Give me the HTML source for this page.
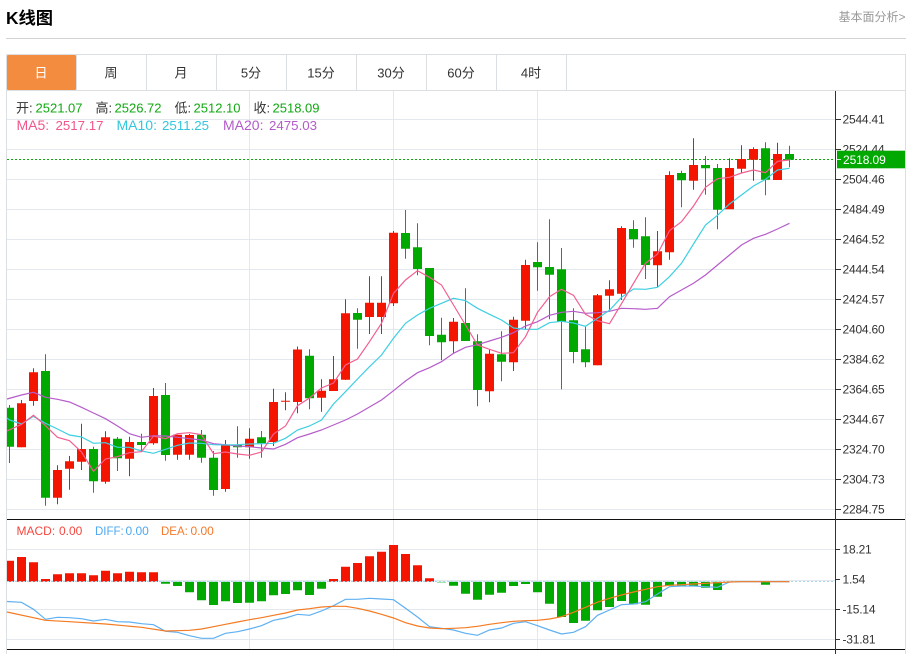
<!DOCTYPE html>
<html lang="zh">
<head>
<meta charset="utf-8">
<title>K线图</title>
<style>
html,body{margin:0;padding:0;background:#fff;width:914px;height:654px;overflow:hidden}
svg{display:block;font-family:"Liberation Sans","Noto Sans CJK SC",sans-serif}
</style>
</head>
<body>
<svg width="914" height="654" viewBox="0 0 914 654" xmlns="http://www.w3.org/2000/svg">
<rect width="914" height="654" fill="#fff"/>
<text x="6" y="24" font-size="17.3" font-weight="bold" fill="#000">K线图</text>
<text x="838.5" y="21" font-size="12" fill="#999">基本面分析&gt;</text>
<path d="M6 38.5H906" stroke="#d2d2d2" fill="none"/>

<!-- frame and tabs -->
<path d="M6.5 54.5H905.5V654M6.5 54.5V654" stroke="#dcdfe2" fill="none"/>
<path d="M76.5 55V90M146.5 55V90M216.5 55V90M286.5 55V90M356.5 55V90M426.5 55V90M496.5 55V90M566.5 55V90M7 90.5H905" stroke="#dcdfe2" fill="none"/>
<rect x="7" y="55" width="69" height="35" rx="1" fill="#f48c40"/>
<g font-size="13" fill="#333" text-anchor="middle">
<text x="41" y="77.5" fill="#fff">日</text>
<text x="111" y="77.5">周</text>
<text x="181" y="77.5">月</text>
<text x="251" y="77.5">5分</text>
<text x="321" y="77.5">15分</text>
<text x="391" y="77.5">30分</text>
<text x="461" y="77.5">60分</text>
<text x="531" y="77.5">4时</text>
</g>

<!-- grid -->
<path d="M7 119.5H835M7 149.5H835M7 179.5H835M7 209.5H835M7 239.5H835M7 269.5H835M7 299.5H835M7 329.5H835M7 359.5H835M7 389.5H835M7 419.5H835M7 449.5H835M7 479.5H835M7 509.5H835M7 549.5H835M7 580.5H835M7 609.5H835M7 639.5H835M249.5 91V650M393.5 91V650M537.5 91V650" stroke="#e2e8ee" fill="none"/>

<!-- last price dashed -->
<path d="M7 159.5H835" stroke="#0ca80c" stroke-dasharray="2 2" fill="none"/>

<!-- candles -->
<path fill="none" stroke="#119f11" d="M9.5 405V463M45.5 354.3V505.7M93.5 446.7V492.7M117.5 437V471M141.5 433.7V452M165.5 383V460.7M201.5 430V462.7M213.5 451V495.7M237.5 426.3V457.7M261.5 431V457.7M309.5 349.3V409.3M357.5 308.3V348.7M405.5 210V258.7M417.5 223.3V275.3M429.5 268V345.3M441.5 317.7V360.3M465.5 288.3V341M477.5 334.3V406.3M501.5 331.3V381.3M537.5 242.3V290.7M549.5 219.3V319.3M561.5 248V389.3M573.5 308.3V363.3M585.5 326.7V367.3M633.5 220.3V247.7M645.5 217.3V279M681.5 170.7V207.3M705.5 156V194.7M717.5 164V229.3M765.5 142.3V195.3M789.5 145.7V167.3"/>
<path fill="none" stroke="#e5140a" d="M21.5 400V447.3M33.5 368.3V405.7M57.5 465.3V504.3M69.5 456V489.7M81.5 423.7V470M105.5 431.3V483.7M129.5 436.7V476.3M153.5 388V444.7M177.5 434.7V459.7M189.5 434V459.7M225.5 440V491.7M249.5 428.3V458.7M273.5 388.7V446M285.5 392.3V410.3M297.5 346.5V413.3M321.5 379.3V411.7M333.5 356V391M345.5 299.3V380M369.5 276.3V334M381.5 276.3V334M393.5 231V306M453.5 318V353.3M489.5 349.7V402.3M513.5 316.7V371M525.5 259.7V329M597.5 294V365.3M609.5 280.3V310M621.5 226.3V300M657.5 231V286.7M669.5 171.3V259.7M693.5 138.3V189.7M729.5 158.3V209M741.5 145.3V172.7M753.5 147.3V180.7M777.5 142.7V180"/>
<path fill="#00a800" d="M7 407.7H14V446.7H7zM41 371H50V497.7H41zM89 449H98V481.3H89zM113 438.7H122V458.3H113zM137 442H146V445H137zM161 395H170V455H161zM197 434.7H206V457.7H197zM209 457.7H218V490H209zM233 445H242V447.3H233zM257 437.3H266V443.3H257zM305 355.7H314V398.3H305zM353 313H362V319.7H353zM401 233H410V248.7H401zM413 247.3H422V269H413zM425 268H434V336H425zM437 334.7H446V342.3H437zM461 323H470V341H461zM473 341.3H482V390H473zM497 354.3H506V361.7H497zM533 262H542V267.3H533zM545 267H554V274.7H545zM557 269.3H566V321.7H557zM569 320.3H578V352H569zM581 349.3H590V362.3H581zM629 229H638V239.3H629zM641 236.3H650V265H641zM677 173H686V180.3H677zM701 165H710V168.3H701zM713 168H722V209.7H713zM761 148.3H770V179.7H761zM785 154H794V159.7H785z"/>
<path fill="#f31500" d="M17 403.3H26V447.3H17zM29 372.3H38V401H29zM53 470H62V497.7H53zM65 461.3H74V468.7H65zM77 449H86V461.7H77zM101 437.3H110V481.7H101zM125 442H134V458.7H125zM149 396H158V443.3H149zM173 434.7H182V454.7H173zM185 435H194V454.7H185zM221 445.3H230V489H221zM245 438.7H254V447.3H245zM269 402H278V442H269zM281 400.7H290V401.7H281zM293 349.5H302V402H293zM317 390.7H326V397.7H317zM329 379.3H338V391H329zM341 313.3H350V379.7H341zM365 302.7H374V317H365zM377 302.7H386V317H377zM389 232.7H398V303.3H389zM449 321.7H458V341.3H449zM485 353.7H494V391.3H485zM509 319.7H518V362.3H509zM521 265H530V320.7H521zM593 295.3H602V365.3H593zM605 289.3H614V295.7H605zM617 228H626V293.7H617zM653 251.3H662V265.3H653zM665 175H674V252.3H665zM689 165H698V180.7H689zM725 168H734V209.3H725zM737 159H746V168.7H737zM749 149H758V159.7H749zM773 154H782V180H773z"/>

<!-- moving averages -->
<polyline fill="none" stroke="#b65ccb" stroke-width="1.2" points="7,399 21.5,395 33.5,392.3 45.5,397.3 57.5,399.3 69.5,402 81.5,407.3 93.5,413 105.5,418.7 117.5,426 129.5,433.7 141.5,437.3 153.5,435.7 165.5,436 177.5,437.3 189.5,438.7 201.5,440 213.5,443.7 225.5,444.7 237.5,446 249.5,446.7 261.5,448 273.5,449 285.5,444.3 297.5,437.7 309.5,434 321.5,430 333.5,425 345.5,420 357.5,414 369.5,407 381.5,400 393.5,390.7 405.5,381 417.5,372.7 429.5,367.7 441.5,361.7 453.5,353.3 465.5,347.3 477.5,344.7 489.5,341 501.5,337.3 513.5,332.7 525.5,326 537.5,321.7 549.5,315.3 561.5,312.3 573.5,311.3 585.5,313.3 597.5,312.7 609.5,311.3 621.5,308.3 633.5,308.7 645.5,309.3 657.5,308.3 669.5,296.7 681.5,290 693.5,283.3 705.5,275 717.5,265 729.5,255 741.5,245 753.5,238.3 765.5,234.3 777.5,229 789.5,223.3"/>
<polyline fill="none" stroke="#3dcfe2" stroke-width="1.2" points="7,418 9.5,420 21.5,424 33.5,416.3 45.5,423.3 57.5,429 69.5,435 81.5,437 93.5,443.3 105.5,442.7 117.5,447.3 129.5,447.3 141.5,451 153.5,453.3 165.5,449.3 177.5,445.3 189.5,443 201.5,443.3 213.5,444.7 225.5,445 237.5,444.7 249.5,444 261.5,443.7 273.5,443.3 285.5,438.3 297.5,430 309.5,426 321.5,420 333.5,404 345.5,391.7 357.5,379 369.5,366.7 381.5,355 393.5,338.3 405.5,323.3 417.5,315 429.5,308.3 441.5,303.3 453.5,298.3 465.5,300.7 477.5,308.3 489.5,314.3 501.5,320 513.5,328 525.5,329.3 537.5,329.3 549.5,322.7 561.5,321.3 573.5,323 585.5,326.3 597.5,318.3 609.5,310.3 621.5,297.3 633.5,289 645.5,289.3 657.5,287.3 669.5,276.7 681.5,263.3 693.5,244 705.5,225 717.5,215.3 729.5,204 741.5,195 753.5,186 765.5,179.3 777.5,170 789.5,168.3"/>
<polyline fill="none" stroke="#f25f90" stroke-width="1.2" points="7,431 21.5,424.3 33.5,415.3 45.5,425.7 57.5,437.3 69.5,440.7 81.5,452 93.5,471.3 105.5,459 117.5,456.7 129.5,452.7 141.5,451.7 153.5,436 165.5,438.7 177.5,433.7 189.5,432.7 201.5,434.7 213.5,453.7 225.5,452 237.5,454 249.5,455.3 261.5,452 273.5,434 285.5,426 297.5,405.7 309.5,398 321.5,388 333.5,383 345.5,365 357.5,359 369.5,341.7 381.5,323.3 393.5,293.3 405.5,280 417.5,270.7 429.5,277.3 441.5,285 453.5,305 465.5,325 477.5,345 489.5,349.3 501.5,353.3 513.5,352.7 525.5,336.7 537.5,312.3 549.5,296.7 561.5,289.3 573.5,295.3 585.5,314.3 597.5,320.7 609.5,323.7 621.5,303.7 633.5,283.3 645.5,263.3 657.5,254 669.5,230.7 681.5,221.7 693.5,206 705.5,187.3 717.5,178.7 729.5,177.3 741.5,173 753.5,170 765.5,172.7 777.5,161.3 789.5,160"/>

<!-- MACD bars -->
<path fill="#f31500" d="M7 560.7H14V581.7H7zM17 557H26V581.7H17zM29 562.3H38V581.7H29zM41 579H50V581.7H41zM53 574.3H62V581.7H53zM65 573.3H74V581.7H65zM77 573.3H86V581.7H77zM89 575.3H98V581.7H89zM101 570.7H110V581.7H101zM113 573.3H122V581.7H113zM125 571.7H134V581.7H125zM137 572.3H146V581.7H137zM149 572.3H158V581.7H149zM329 579H338V581.7H329zM341 566.7H350V581.7H341zM353 563H362V581.7H353zM365 556.3H374V581.7H365zM377 551.7H386V581.7H377zM389 545H398V581.7H389zM401 554H410V581.7H401zM413 565.3H422V581.7H413zM425 578.3H434V581.7H425z"/>
<path fill="#00a800" d="M161 581.7H170V583.7H161zM173 581.7H182V586H173zM185 581.7H194V592.3H185zM197 581.7H206V600.3H197zM209 581.7H218V605H209zM221 581.7H230V601.3H221zM233 581.7H242V603H233zM245 581.7H254V602.7H245zM257 581.7H266V601.3H257zM269 581.7H278V595.3H269zM281 581.7H290V594H281zM293 581.7H302V590.3H293zM305 581.7H314V595H305zM317 581.7H326V588.7H317zM449 581.7H458V585.7H449zM461 581.7H470V593.7H461zM473 581.7H482V599.7H473zM485 581.7H494V594.7H485zM497 581.7H506V592.7H497zM509 581.7H518V586H509zM521 581.7H530V584H521zM533 581.7H542V592.3H533zM545 581.7H554V603.7H545zM557 581.7H566V617H557zM569 581.7H578V623H569zM581 581.7H590V620.7H581zM593 581.7H602V610.3H593zM605 581.7H614V607H605zM617 581.7H626V601H617zM629 581.7H638V604.3H629zM641 581.7H650V604.7H641zM653 581.7H662V596.7H653zM665 581.7H674V585.7H665zM677 581.7H686V586H677zM689 581.7H698V586H689zM701 581.7H710V587.7H701zM713 581.7H722V590H713zM761 581.7H770V584.7H761z"/>
<path fill="#a0e3ae" d="M437 581.7H446V583H437z"/>
<path d="M7 581.5H835" stroke="#a9d8ee" stroke-dasharray="2 2" fill="none"/>

<!-- MACD lines -->
<polyline fill="none" stroke="#5fb0f2" stroke-width="1.2" points="7,601.5 21.5,602.3 33.5,609.3 45.5,619.3 57.5,617.3 69.5,617.7 81.5,618.7 93.5,621 105.5,619.3 117.5,621.7 129.5,622 141.5,623.7 153.5,624.7 165.5,631.3 177.5,632.3 189.5,635.7 201.5,638.3 213.5,638.3 225.5,633.3 237.5,631.7 249.5,629 261.5,625.7 273.5,620.3 285.5,618 297.5,614.3 309.5,615.3 321.5,611 333.5,605.7 345.5,599.3 357.5,599.3 369.5,598.3 381.5,599 393.5,599.7 405.5,608.3 417.5,617 429.5,626.7 441.5,628.3 453.5,630 465.5,633.3 477.5,635.3 489.5,630 501.5,628 513.5,623.3 525.5,621.7 537.5,625.7 549.5,630 561.5,634 573.5,632.3 585.5,626.7 597.5,615.3 609.5,610 621.5,604.7 633.5,604 645.5,601.7 657.5,594 669.5,586.7 681.5,586 693.5,586 705.5,586.7 717.5,587.3 729.5,582 741.5,581.7 753.5,581.7 765.5,581.7 777.5,581.7 789.5,581.7"/>
<polyline fill="none" stroke="#f57a22" stroke-width="1.2" points="7,612 45.5,620.3 69.5,621.7 105.5,624 141.5,627.3 165.5,631 177.5,630.7 189.5,630.3 201.5,629 213.5,626.7 225.5,624.3 237.5,622 249.5,619.7 261.5,617.7 273.5,615.3 285.5,613 297.5,610 309.5,608.7 321.5,607 333.5,606.3 345.5,606.3 357.5,608.3 369.5,611 381.5,614.3 393.5,618 405.5,622.7 417.5,626 429.5,628 441.5,628.7 453.5,628.3 465.5,627.7 477.5,626.3 489.5,624.3 501.5,622.7 513.5,621.3 525.5,620.7 537.5,620.3 549.5,619 561.5,616.7 573.5,612.3 585.5,607.3 597.5,602.2 609.5,598.3 621.5,595 633.5,592 645.5,589.3 657.5,586.7 669.5,585.3 681.5,584.7 693.5,584 705.5,583.3 717.5,582.7 729.5,582 741.5,581.7 789.5,581.7"/>

<!-- axes and separators -->
<path d="M7 519.5H905M7 649.5H905" stroke="#111" fill="none"/>
<path d="M835.5 91V654" stroke="#333" fill="none"/>
<path d="M835 119.5H841M835 149.5H841M835 179.5H841M835 209.5H841M835 239.5H841M835 269.5H841M835 299.5H841M835 329.5H841M835 359.5H841M835 389.5H841M835 419.5H841M835 449.5H841M835 479.5H841M835 509.5H841M835 549.5H840M835 579.5H840M835 609.5H840M835 639.5H840" stroke="#333" fill="none"/>

<g font-size="12" fill="#333" letter-spacing="-0.2">
<text x="842.5" y="123.5">2544.41</text>
<text x="842.5" y="153.5">2524.44</text>
<text x="842.5" y="183.5">2504.46</text>
<text x="842.5" y="213.5">2484.49</text>
<text x="842.5" y="243.5">2464.52</text>
<text x="842.5" y="273.5">2444.54</text>
<text x="842.5" y="303.5">2424.57</text>
<text x="842.5" y="333.5">2404.60</text>
<text x="842.5" y="363.5">2384.62</text>
<text x="842.5" y="393.5">2364.65</text>
<text x="842.5" y="423.5">2344.67</text>
<text x="842.5" y="453.5">2324.70</text>
<text x="842.5" y="483.5">2304.73</text>
<text x="842.5" y="513.5">2284.75</text>
<text x="842.5" y="553.5">18.21</text>
<text x="842.5" y="583.5">1.54</text>
<text x="842.5" y="613.5">-15.14</text>
<text x="842.5" y="643.5">-31.81</text>
</g>

<!-- price tag -->
<rect x="837" y="150.7" width="68" height="17.6" fill="#00a800"/>
<path d="M837 159.5H841" stroke="#cfeecf" fill="none"/>
<text x="843" y="164" font-size="12" fill="#fff" letter-spacing="-0.1">2518.09</text>

<!-- legends -->
<g font-size="13" fill="#333">
<text x="16" y="112.5">开:</text>
<text x="95.5" y="112.5">高:</text>
<text x="174.5" y="112.5">低:</text>
<text x="253.5" y="112.5">收:</text>
</g>
<g font-size="13" fill="#10a810">
<text x="35.5" y="112.5">2521.07</text>
<text x="114.5" y="112.5">2526.72</text>
<text x="193.5" y="112.5">2512.10</text>
<text x="272.5" y="112.5">2518.09</text>
</g>
<g font-size="13.3">
<text x="16.5" y="130" fill="#f2568c" font-size="14">MA5:</text>
<text x="55.5" y="130" fill="#f2568c">2517.17</text>
<text x="116.5" y="130" fill="#33c6de" font-size="14">MA10:</text>
<text x="162" y="130" fill="#33c6de">2511.25</text>
<text x="223" y="130" fill="#b25cc8" font-size="14">MA20:</text>
<text x="269" y="130" fill="#b25cc8">2475.03</text>
</g>
<g font-size="12">
<text x="16.5" y="535" fill="#f4473e">MACD:</text>
<text x="59" y="535" fill="#f4473e">0.00</text>
<text x="95" y="535" fill="#4ea8f0" font-size="11.5">DIFF:</text>
<text x="125.5" y="535" fill="#4ea8f0">0.00</text>
<text x="161" y="535" fill="#f5792a" font-size="11.5">DEA:</text>
<text x="190.5" y="535" fill="#f5792a">0.00</text>
</g>
</svg>
</body>
</html>
